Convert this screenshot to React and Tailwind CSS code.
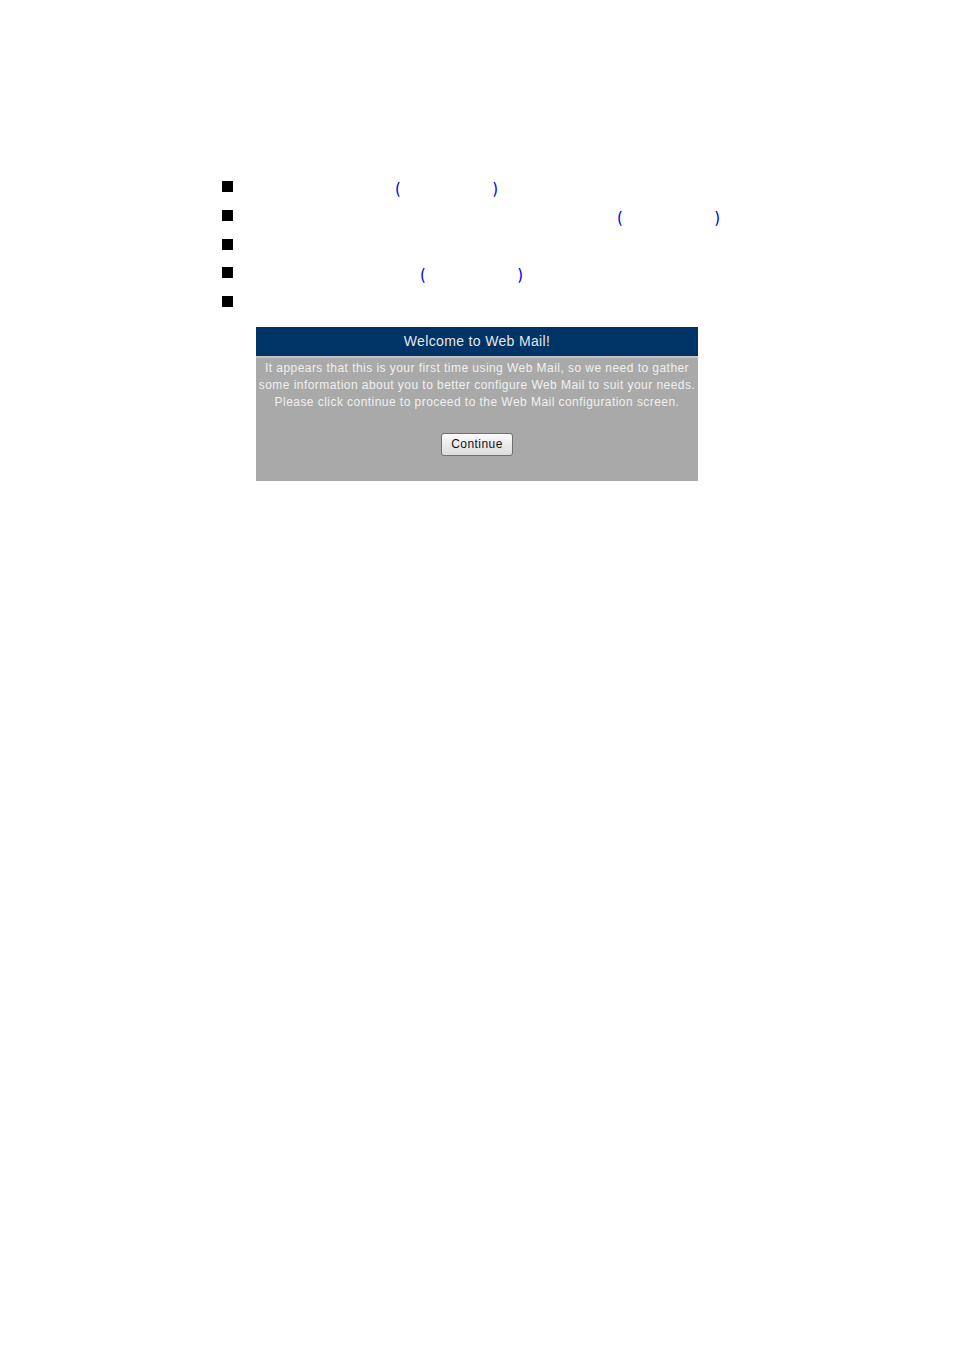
import React from 'react';

const Paren = ({ children }) => (
  <span className="text-[15px] font-medium leading-[15px] text-[#0000f0] font-['Noto_Sans_CJK_SC',sans-serif]">{children}</span>
);

const Bullet = () => <span className="block h-[11px] w-[11px] shrink-0 bg-black" />;

export default function App() {
  return (
    <div className="min-h-[1350px] bg-white pt-[176px] font-['Liberation_Sans',Arial,sans-serif]">
      <ul className="ml-[222px]">
        <li className="flex h-[28.75px] items-start pt-[5px]">
          <Bullet />
          <span className="ml-[162px] -mt-[1px] flex w-[103px] justify-between">
            <Paren>(</Paren>
            <Paren>)</Paren>
          </span>
        </li>
        <li className="flex h-[28.75px] items-start pt-[5px]">
          <Bullet />
          <span className="ml-[384px] -mt-[1px] flex w-[103px] justify-between">
            <Paren>(</Paren>
            <Paren>)</Paren>
          </span>
        </li>
        <li className="flex h-[28.75px] items-start pt-[5px]">
          <Bullet />
        </li>
        <li className="flex h-[28.75px] items-start pt-[5px]">
          <Bullet />
          <span className="ml-[187px] -mt-[1px] flex w-[103px] justify-between">
            <Paren>(</Paren>
            <Paren>)</Paren>
          </span>
        </li>
        <li className="flex h-[28.75px] items-start pt-[5px]">
          <Bullet />
        </li>
      </ul>

      <div className="ml-[256px] mt-[7px] w-[442px] bg-[#a9a9a9]">
        <div className="flex h-[29px] items-center justify-center bg-[#003366] text-[14px] tracking-[0.35px] text-[#e6e6e6]">
          Welcome to Web Mail!
        </div>
        <div className="h-[2px] bg-[#c4c4c4]" />
        <div className="pb-[25px] pt-[2px] text-center text-[12px] leading-[17px] tracking-[0.45px] text-[#f0f0f0]">
          <p className="whitespace-nowrap">
            It appears that this is your first time using Web Mail, so we need to gather
            <br />
            some information about you to better configure Web Mail to suit your needs.
            <br />
            Please click continue to proceed to the Web Mail configuration screen.
          </p>
          <button className="mt-[22px] h-[23px] w-[72px] rounded-[3px] border border-[#707070] bg-gradient-to-b from-[#fbfbfb] to-[#dcdcdc] text-[12px] text-[#111]">
            Continue
          </button>
        </div>
      </div>
    </div>
  );
}
